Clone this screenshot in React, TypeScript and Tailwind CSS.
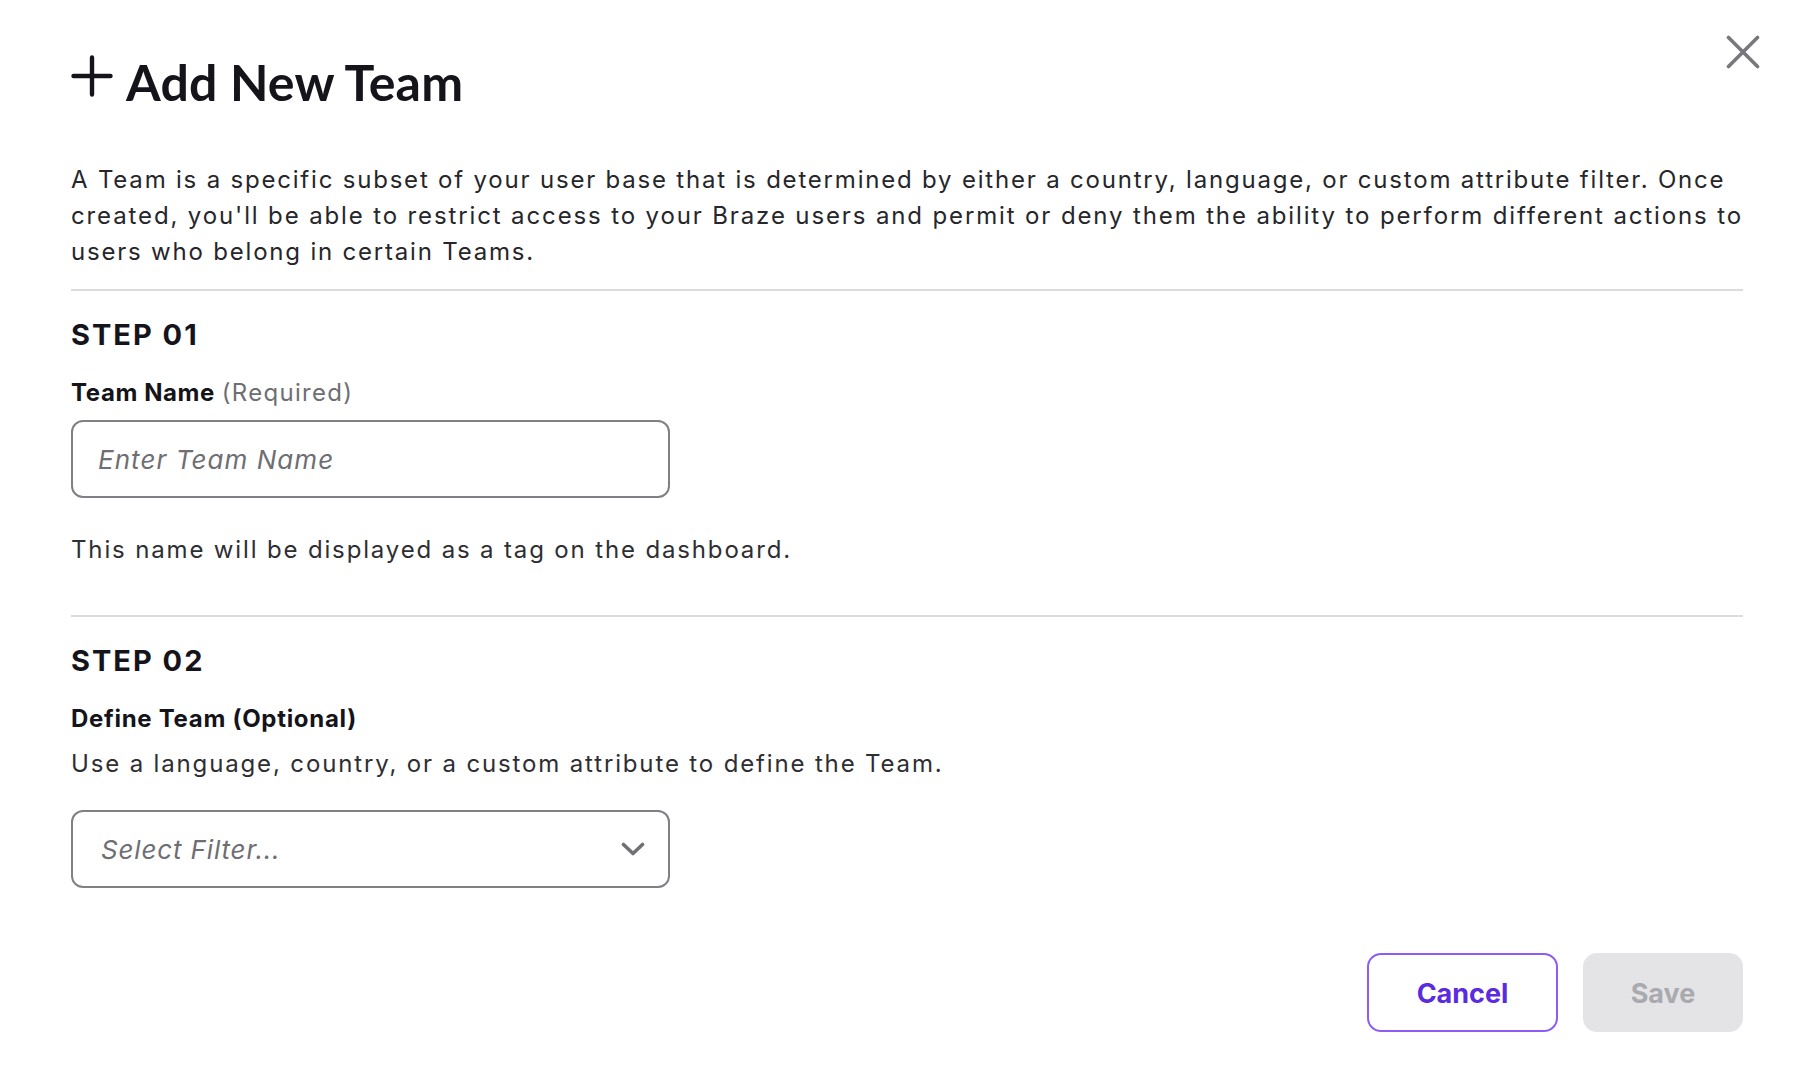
import React from "react";

export default function App() {
  return (
    <div className="relative min-h-screen bg-white pl-[71px] pr-[59px] pt-[52px] pb-[48px] font-['Inter',sans-serif] text-[#26262b]">
      <button
        aria-label="Close"
        className="absolute right-[42px] top-[35px] h-[34px] w-[34px] text-[#77777c]"
      >
        <svg viewBox="0 0 34 34" width="34" height="34" fill="none" stroke="currentColor" strokeWidth="3.6" strokeLinecap="round">
          <path d="M2.5 2.5 L31.5 31.5 M31.5 2.5 L2.5 31.5" />
        </svg>
      </button>

      <h1 className="flex items-start font-['Lato',sans-serif] text-[50px] leading-[60px] font-bold text-[#14141a]">
        <svg className="mt-[3px] shrink-0" viewBox="0 0 42 42" width="42" height="42" fill="none" stroke="currentColor" strokeWidth="4.4" strokeLinecap="round">
          <path d="M21 2.5 V39.5 M2.5 21 H39.5" />
        </svg>
        <span className="ml-[13px] tracking-[0.2px]">Add New Team</span>
      </h1>

      <p className="mt-[50px] text-[24px] leading-[36px] tracking-[1.8px]">
        <span className="block whitespace-nowrap">A Team is a specific subset of your user base that is determined by either a country, language, or custom attribute filter. Once</span>
        <span className="block whitespace-nowrap tracking-[1.87px]">created, you'll be able to restrict access to your Braze users and permit or deny them the ability to perform different actions to</span>
        <span className="block whitespace-nowrap">users who belong in certain Teams.</span>
      </p>

      <div className="mt-[19px] h-[2px] bg-[#dcdce0]" />

      <h2 className="mt-[26px] text-[29px] leading-[36px] font-bold tracking-[2px] text-[#14141a]">STEP 01</h2>
      <div className="mt-[22px] text-[24px] leading-[36px]">
        <span className="font-bold tracking-[0.6px] text-[#14141a]">Team Name</span>{" "}
        <span className="tracking-[1.3px] text-[#6e6e73]">(Required)</span>
      </div>
      <div className="mt-[9px] flex h-[78px] w-[599px] items-center rounded-[12px] border-2 border-[#808085] pl-[25px]">
        <span className="text-[26px] italic tracking-[1.05px] text-[#6e6e73]">Enter Team Name</span>
      </div>
      <p className="mt-[34px] text-[24px] leading-[36px] tracking-[1.85px] text-[#2e2e33]">
        This name will be displayed as a tag on the dashboard.
      </p>

      <div className="mt-[47px] h-[2px] bg-[#dcdce0]" />

      <h2 className="mt-[26px] text-[29px] leading-[36px] font-bold tracking-[2px] text-[#14141a]">STEP 02</h2>
      <div className="mt-[22px] text-[24px] leading-[36px] font-bold tracking-[0.7px] text-[#14141a]">Define Team (Optional)</div>
      <p className="mt-[9px] text-[24px] leading-[36px] tracking-[1.85px] text-[#2e2e33]">
        Use a language, country, or a custom attribute to define the Team.
      </p>
      <div className="mt-[28px] flex h-[78px] w-[599px] items-center justify-between rounded-[12px] border-2 border-[#808085] pl-[28px] pr-[23px]">
        <span className="text-[26px] italic tracking-[0.85px] text-[#6e6e73]">Select Filter...</span>
        <svg viewBox="0 0 24 14" width="24" height="14" fill="none" stroke="#707075" strokeWidth="3.6" strokeLinecap="round" strokeLinejoin="round">
          <path d="M2.5 2.5 L12 11.5 L21.5 2.5" />
        </svg>
      </div>

      <div className="mt-[65px] flex justify-end gap-[25px]">
        <button className="flex h-[79px] w-[191px] items-center justify-center rounded-[14px] border-2 border-[#8d5cf6] bg-white pt-[3px] text-[27px] font-bold text-[#5b2be0]">
          Cancel
        </button>
        <button className="flex h-[79px] w-[160px] items-center justify-center rounded-[14px] bg-[#e4e4e6] pt-[3px] text-[27px] font-bold text-[#a9a9b0]">
          Save
        </button>
      </div>
    </div>
  );
}
